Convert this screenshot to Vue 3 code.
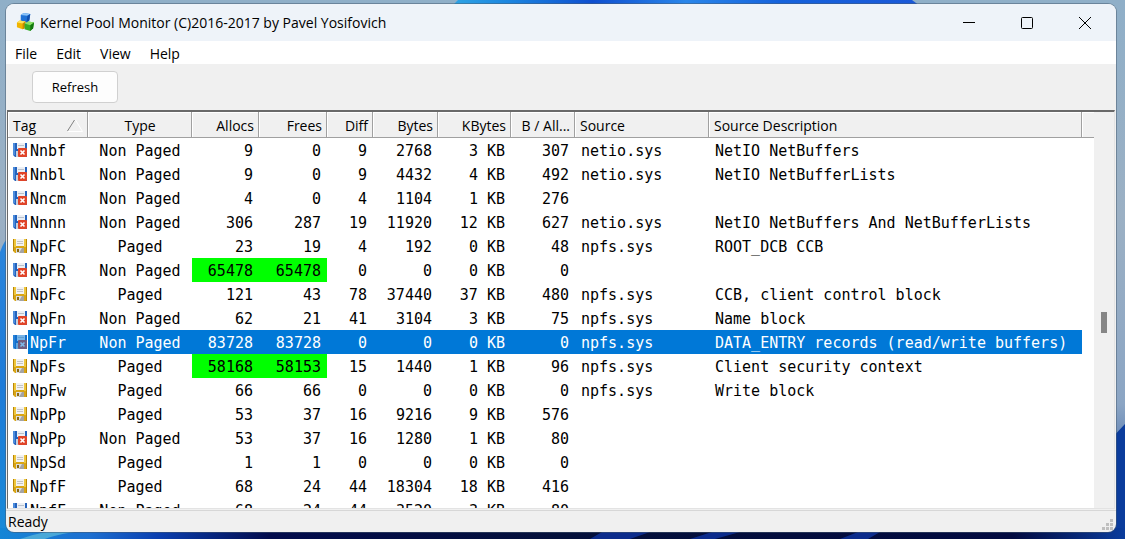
<template>
  <div class="desktop">
    <svg class="wallpaper" viewBox="0 0 1125 539" preserveAspectRatio="none" aria-hidden="true">
      <defs>
        <linearGradient id="sky" x1="0" y1="0" x2="0" y2="1">
          <stop offset="0" stop-color="#8fafc8" />
          <stop offset="0.4" stop-color="#9bb0c4" />
          <stop offset="0.75" stop-color="#8ba5c4" />
          <stop offset="1" stop-color="#0b3c94" />
        </linearGradient>
        <linearGradient id="crest" x1="0" y1="0" x2="1" y2="0">
          <stop offset="0" stop-color="#2fa4e4" />
          <stop offset="0.12" stop-color="#1c86e0" />
          <stop offset="0.3" stop-color="#0f4fd0" />
          <stop offset="0.5" stop-color="#2a86ea" />
          <stop offset="0.7" stop-color="#1562dc" />
          <stop offset="1" stop-color="#1a58d8" />
        </linearGradient>
        <linearGradient id="petal" x1="0" y1="0" x2="0" y2="1">
          <stop offset="0" stop-color="#2d86dc" />
          <stop offset="0.5" stop-color="#1e7bd8" />
          <stop offset="1" stop-color="#1a8ad8" />
        </linearGradient>
        <linearGradient id="floor" x1="0" y1="0" x2="1" y2="0">
          <stop offset="0" stop-color="#1585d6" />
          <stop offset="0.08" stop-color="#1d6fd0" />
          <stop offset="0.14" stop-color="#0a3fb0" />
          <stop offset="0.24" stop-color="#020b4c" />
          <stop offset="0.5" stop-color="#04103a" />
          <stop offset="0.9" stop-color="#020a40" />
          <stop offset="1" stop-color="#0a3c9c" />
        </linearGradient>
      </defs>
      <rect width="1125" height="539" fill="url(#sky)" />
      <path d="M452 6 L458 0 H912 L920 6 Z" fill="url(#crest)" />
      <path d="M0 252 Q4 240 12 234 V539 H0 Z" fill="url(#petal)" />
      <path d="M1110 440 L1125 424 V539 H1110 Z" fill="#0b3c9c" />
      <rect y="528" width="1125" height="11" fill="url(#floor)" />
      <path d="M20 539 Q45 530 70 530 L90 530 Q60 533 45 539 Z" fill="#4aa8d8" />
      <path d="M590 539 L602 532 H650 L630 539 Z M690 539 L712 532 H740 L715 539 Z M840 539 L858 532 H880 L868 539 Z" fill="#0c2c8c" />
    </svg>

    <main class="window">
      <header class="title-bar">
        <svg class="app-icon" viewBox="0 0 20 20" aria-hidden="true">
          <path d="M5 2 L8 0 L15 1 L14 8 L11 10 L5 9 Z" fill="#1f72d6" />
          <path d="M5 2 L8 0 L15 1 L12 3 Z" fill="#8cc4f8" />
          <path d="M12 3 L15 1 L14 8 L11 10 Z" fill="#0f4fae" />
          <path d="M1 10 L4 8 L10 9 L9 16 L7 17 L1 15 Z" fill="#f0b400" />
          <path d="M1 10 L4 8 L10 9 L7 11 Z" fill="#ffe35c" />
          <path d="M7 11 L10 9 L9 16 L7 17 Z" fill="#c98800" />
          <path d="M9 11 L13 9 L19 10 L18 16 L15 19 L9 17 Z" fill="#35ad28" />
          <path d="M9 11 L13 9 L19 10 L15 13 Z" fill="#8be068" />
          <path d="M15 13 L19 10 L18 16 L15 19 Z" fill="#14780f" />
        </svg>
        <h1>Kernel Pool Monitor (C)2016-2017 by Pavel Yosifovich</h1>
        <div class="caption-buttons">
          <button type="button" aria-label="Minimize">
            <svg viewBox="0 0 14 14"><path d="M1 6.5 H13" /></svg>
          </button>
          <button type="button" aria-label="Maximize">
            <svg viewBox="0 0 14 14"><rect x="1.5" y="1.5" width="11" height="11" rx="1" /></svg>
          </button>
          <button type="button" aria-label="Close">
            <svg viewBox="0 0 14 14"><path d="M1 1 L13 13 M13 1 L1 13" /></svg>
          </button>
        </div>
      </header>

      <nav class="menu-bar">
        <button v-for="item in menu" :key="item" type="button">{{ item }}</button>
      </nav>

      <div class="toolbar">
        <button type="button" class="refresh-btn">Refresh</button>
      </div>

      <div class="list-view">
        <div class="list-body">
          <table>
            <colgroup>
              <col v-for="col in columns" :key="col.key" :class="'col-' + col.key" />
              <col class="col-filler" />
            </colgroup>
            <thead>
              <tr>
                <th v-for="col in columns" :key="col.key" :class="col.align">
                  <span class="head-cell">
                    <span class="head-text">{{ col.label }}</span>
                    <svg v-if="col.key === sortKey" class="sort-mark" viewBox="0 0 16 13" aria-hidden="true">
                      <path d="M1 12.5 H15.5 L8.5 1" stroke="#ffffff" />
                      <path d="M0.5 12 L7.5 1" stroke="#808080" />
                    </svg>
                  </span>
                </th>
                <th class="filler"></th>
              </tr>
            </thead>
            <tbody>
              <tr
                v-for="(row, i) in rows"
                :key="i"
                :class="{ selected: i === selected }"
                @click="selected = i"
              >
                <td class="tag">
                  <span class="tag-cell">
                    <svg class="disk" viewBox="0 0 14 14" aria-hidden="true">
                      <template v-if="row.type === 'Paged'">
                        <path d="M0 0 H14 V14 H2 L0 12 Z" fill="#d9a514" />
                        <path d="M0 0 H1 V12 H0 Z M13 0 H14 V14 H13 Z" fill="#b98608" />
                        <path d="M1 0 H3 V8 H1 Z M11 0 H13 V8 H11 Z" fill="#eec63c" />
                        <rect x="3" y="0" width="8" height="7" fill="#f2f2f2" />
                        <path d="M4 2.5 H10 M4 4.5 H10" stroke="#c4c4c4" />
                        <rect x="3" y="9" width="8" height="5" fill="#dcdcdc" />
                        <path d="M9 9 H11 V14 H6 Z" fill="#a4a4a4" />
                        <rect x="4" y="10" width="2" height="3" fill="#8a6a10" />
                      </template>
                      <template v-else>
                        <path d="M0 0 H14 V14 H2 L0 12 Z" fill="#2462bc" />
                        <rect x="0" y="0" width="2" height="12" fill="#4c8cdc" />
                        <rect x="4" y="0" width="8" height="6" fill="#eceff4" />
                        <path d="M5 2.5 H11" stroke="#b8c0cc" />
                        <rect x="3" y="8" width="3" height="6" fill="#c8d0dc" />
                        <rect x="5" y="5" width="9" height="9" rx="1" fill="#e04428" />
                        <path d="M7.5 7.5 L11.5 11.5 M11.5 7.5 L7.5 11.5" stroke="#ffffff" stroke-width="1.6" />
                      </template>
                      <rect v-if="i === selected" width="14" height="14" fill="#0078d7" opacity="0.5" />
                    </svg>
                    <span class="tag-text">{{ row.tag }}</span>
                  </span>
                </td>
                <td class="center">{{ row.type }}</td>
                <td class="right" :class="{ changed: row.changed }">{{ row.allocs }}</td>
                <td class="right" :class="{ changed: row.changed }">{{ row.frees }}</td>
                <td class="right">{{ row.diff }}</td>
                <td class="right">{{ row.bytes }}</td>
                <td class="right">{{ row.kb }} KB</td>
                <td class="right">{{ row.per }}</td>
                <td class="left">{{ row.source }}</td>
                <td class="left">{{ row.desc }}</td>
                <td class="filler"></td>
              </tr>
            </tbody>
          </table>
        </div>
        <div class="scrollbar"><div class="thumb"></div></div>
      </div>

      <footer class="status-bar">
        <span>Ready</span>
        <svg class="grip" viewBox="0 0 12 12" aria-hidden="true">
          <path d="M8 0 h3 v3 h-3 Z M4 4 h3 v3 h-3 Z M8 4 h3 v3 h-3 Z M0 8 h3 v3 h-3 Z M4 8 h3 v3 h-3 Z M8 8 h3 v3 h-3 Z" />
        </svg>
      </footer>
    </main>
  </div>
</template>

<script setup>
import { ref } from 'vue';

const menu = ['File', 'Edit', 'View', 'Help'];

const columns = [
  { key: 'tag', label: 'Tag', align: 'left' },
  { key: 'type', label: 'Type', align: 'center' },
  { key: 'allocs', label: 'Allocs', align: 'right' },
  { key: 'frees', label: 'Frees', align: 'right' },
  { key: 'diff', label: 'Diff', align: 'right' },
  { key: 'bytes', label: 'Bytes', align: 'right' },
  { key: 'kb', label: 'KBytes', align: 'right' },
  { key: 'per', label: 'B / All...', align: 'right' },
  { key: 'source', label: 'Source', align: 'left' },
  { key: 'desc', label: 'Source Description', align: 'left' }
];

const sortKey = ref('tag');
const selected = ref(8);

const N = 'Non Paged';
const P = 'Paged';

const rows = [
  { tag: 'Nnbf', type: N, allocs: 9, frees: 0, diff: 9, bytes: 2768, kb: 3, per: 307, source: 'netio.sys', desc: 'NetIO NetBuffers' },
  { tag: 'Nnbl', type: N, allocs: 9, frees: 0, diff: 9, bytes: 4432, kb: 4, per: 492, source: 'netio.sys', desc: 'NetIO NetBufferLists' },
  { tag: 'Nncm', type: N, allocs: 4, frees: 0, diff: 4, bytes: 1104, kb: 1, per: 276 },
  { tag: 'Nnnn', type: N, allocs: 306, frees: 287, diff: 19, bytes: 11920, kb: 12, per: 627, source: 'netio.sys', desc: 'NetIO NetBuffers And NetBufferLists' },
  { tag: 'NpFC', type: P, allocs: 23, frees: 19, diff: 4, bytes: 192, kb: 0, per: 48, source: 'npfs.sys', desc: 'ROOT_DCB CCB' },
  { tag: 'NpFR', type: N, allocs: 65478, frees: 65478, diff: 0, bytes: 0, kb: 0, per: 0, changed: true },
  { tag: 'NpFc', type: P, allocs: 121, frees: 43, diff: 78, bytes: 37440, kb: 37, per: 480, source: 'npfs.sys', desc: 'CCB, client control block' },
  { tag: 'NpFn', type: N, allocs: 62, frees: 21, diff: 41, bytes: 3104, kb: 3, per: 75, source: 'npfs.sys', desc: 'Name block' },
  { tag: 'NpFr', type: N, allocs: 83728, frees: 83728, diff: 0, bytes: 0, kb: 0, per: 0, source: 'npfs.sys', desc: 'DATA_ENTRY records (read/write buffers)' },
  { tag: 'NpFs', type: P, allocs: 58168, frees: 58153, diff: 15, bytes: 1440, kb: 1, per: 96, source: 'npfs.sys', desc: 'Client security context', changed: true },
  { tag: 'NpFw', type: P, allocs: 66, frees: 66, diff: 0, bytes: 0, kb: 0, per: 0, source: 'npfs.sys', desc: 'Write block' },
  { tag: 'NpPp', type: P, allocs: 53, frees: 37, diff: 16, bytes: 9216, kb: 9, per: 576 },
  { tag: 'NpPp', type: N, allocs: 53, frees: 37, diff: 16, bytes: 1280, kb: 1, per: 80 },
  { tag: 'NpSd', type: P, allocs: 1, frees: 1, diff: 0, bytes: 0, kb: 0, per: 0 },
  { tag: 'NpfF', type: P, allocs: 68, frees: 24, diff: 44, bytes: 18304, kb: 18, per: 416 },
  { tag: 'NpfF', type: N, allocs: 68, frees: 24, diff: 44, bytes: 3520, kb: 3, per: 80 }
];
</script>

<style>
body {
  overflow: hidden;
}
</style>

<style scoped>
.desktop {
  position: relative;
  display: flex;
  height: 100vh;
  box-sizing: border-box;
  padding: 4px 9px 7px 6px;
  font-family: "Open Sans", "Noto Sans", sans-serif;
  font-size: 14px;
  color: #000;
}
.wallpaper {
  position: absolute;
  inset: 0;
  width: 100%;
  height: 100%;
}
.window {
  position: relative;
  flex: 1;
  min-width: 0;
  display: flex;
  flex-direction: column;
  background: #f0f0f0;
  border-radius: 8px;
  overflow: hidden;
  box-shadow: 0 0 0 1px rgba(70, 90, 110, 0.5);
}
button {
  font: inherit;
  color: inherit;
  border: none;
  background: none;
  padding: 0;
}
.title-bar {
  display: flex;
  align-items: center;
  height: 37px;
  flex: none;
  padding: 0 2px 0 10px;
  background: #eef3f9;
}
.app-icon {
  width: 19px;
  height: 19px;
}
h1 {
  margin: 0;
  padding-left: 5px;
  flex: 1;
  font-size: 14px;
  font-weight: normal;
}
.caption-buttons {
  display: flex;
  align-self: stretch;
}
.caption-buttons button {
  width: 58px;
  display: flex;
  align-items: center;
  justify-content: center;
}
.caption-buttons svg {
  width: 14px;
  height: 14px;
  fill: none;
  stroke: #000;
}
.menu-bar {
  display: flex;
  gap: 19px;
  height: 23px;
  flex: none;
  box-sizing: border-box;
  padding: 2px 0 0 9px;
  background: #fff;
}
.toolbar {
  flex: none;
  padding: 7px 26px;
  height: 32px;
}
.refresh-btn {
  width: 86px;
  height: 32px;
  border: 1px solid #d0d0d0;
  border-radius: 4px;
  background: #fdfdfd;
  font-size: 13px;
}
.list-view {
  flex: 1;
  min-height: 0;
  display: flex;
  margin: 0 1px;
  border: 1px solid #696969;
  border-width: 2px 1px 1px 1px;
  border-color: #696969 #e3e3e3 #e3e3e3 #696969;
  background: #fff;
}
.list-body {
  flex: 1;
  min-width: 0;
  overflow: hidden;
}
table {
  width: 100%;
  table-layout: fixed;
  border-collapse: separate;
  border-spacing: 0;
}
.col-tag { width: 80px; }
.col-type { width: 104px; }
.col-allocs { width: 67px; }
.col-frees { width: 68px; }
.col-diff { width: 46px; }
.col-bytes { width: 65px; }
.col-kb { width: 73px; }
.col-per { width: 64px; }
.col-source { width: 134px; }
.col-filler { width: 12px; }
th {
  height: 26px;
  box-sizing: border-box;
  padding: 2px 4px 0 5px;
  font-weight: normal;
  white-space: nowrap;
  background: #f0f0f0;
  border-right: 1px solid #a0a0a0;
  border-bottom: 1px solid #a0a0a0;
  box-shadow: inset 1px 1px #fff;
}
th.filler {
  border-right: none;
}
.head-cell {
  display: flex;
  align-items: center;
}
.head-text {
  flex: 1;
}
.sort-mark {
  width: 16px;
  height: 13px;
  fill: none;
}
td {
  padding: 2px 6px 0 6px;
  font-family: "DejaVu Sans Mono", "Liberation Mono", monospace;
  font-size: 15px;
  line-height: 22px;
  white-space: nowrap;
  overflow: hidden;
}
.left { text-align: left; }
.center { text-align: center; }
.right { text-align: right; }
td.tag,
td.filler {
  padding: 0;
}
.tag-cell {
  display: flex;
  align-items: center;
  padding-left: 5px;
}
.disk {
  width: 14px;
  height: 14px;
}
.tag-text {
  flex: 1;
  margin-left: 1px;
  padding: 2px 0 0 2px;
}
td.changed {
  background: #00ff00;
}
.selected td:not(.tag):not(.filler),
.selected .tag-text {
  background: #0078d7;
  color: #fff;
}
.scrollbar {
  width: 20px;
  display: flex;
  justify-content: center;
  background: #f0f0f0;
}
.thumb {
  width: 6px;
  height: 21px;
  margin-top: 200px;
  background: #868686;
}
.status-bar {
  flex: none;
  display: flex;
  justify-content: space-between;
  align-items: flex-end;
  height: 21px;
  margin-top: 1px;
  border-top: 1px solid #d7d7d7;
  padding: 0 2px;
  line-height: 20px;
}
.grip {
  width: 12px;
  height: 12px;
  margin-bottom: 1px;
  fill: #bfbfbf;
}
</style>
